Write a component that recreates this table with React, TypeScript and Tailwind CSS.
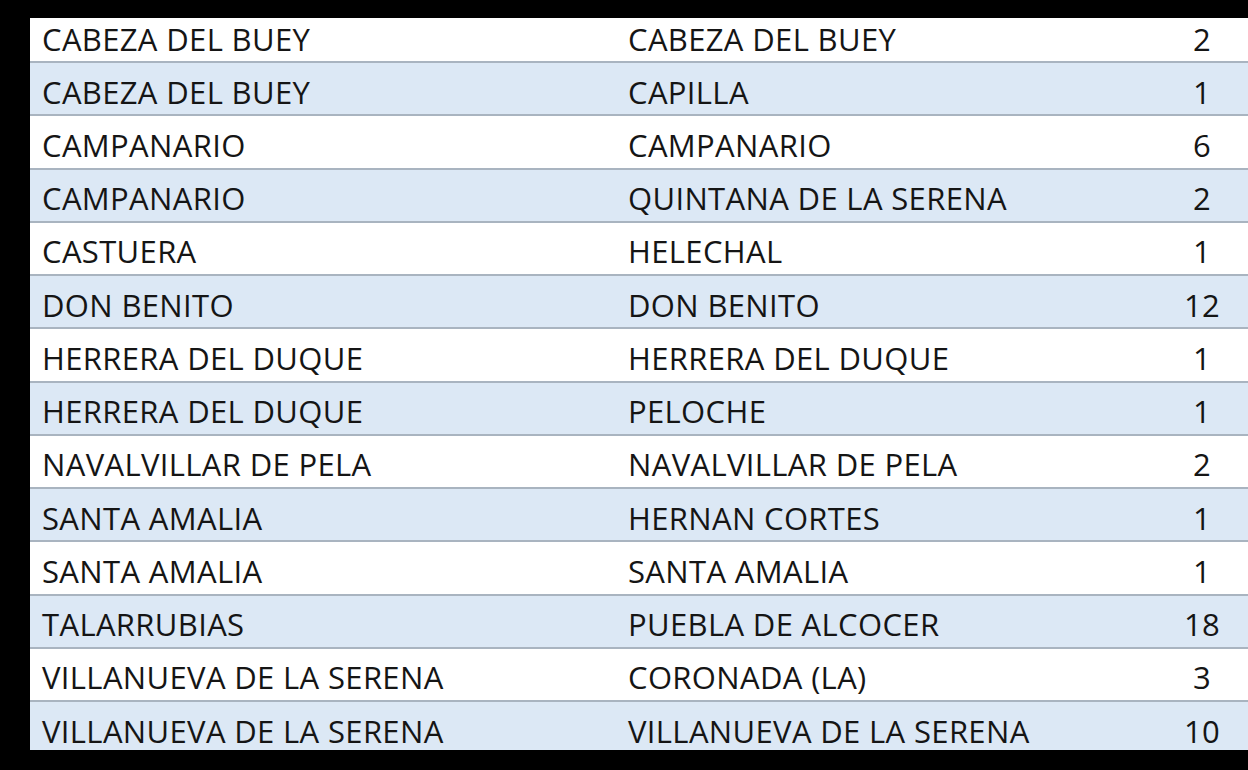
const rows: [string, string, number][] = [
  ['CABEZA DEL BUEY', 'CABEZA DEL BUEY', 2],
  ['CABEZA DEL BUEY', 'CAPILLA', 1],
  ['CAMPANARIO', 'CAMPANARIO', 6],
  ['CAMPANARIO', 'QUINTANA DE LA SERENA', 2],
  ['CASTUERA', 'HELECHAL', 1],
  ['DON BENITO', 'DON BENITO', 12],
  ['HERRERA DEL DUQUE', 'HERRERA DEL DUQUE', 1],
  ['HERRERA DEL DUQUE', 'PELOCHE', 1],
  ['NAVALVILLAR DE PELA', 'NAVALVILLAR DE PELA', 2],
  ['SANTA AMALIA', 'HERNAN CORTES', 1],
  ['SANTA AMALIA', 'SANTA AMALIA', 1],
  ['TALARRUBIAS', 'PUEBLA DE ALCOCER', 18],
  ['VILLANUEVA DE LA SERENA', 'CORONADA (LA)', 3],
  ['VILLANUEVA DE LA SERENA', 'VILLANUEVA DE LA SERENA', 10],
];

export default function App() {
  const last = rows.length - 1;
  return (
    <div className="w-[1248px] h-[770px] bg-black pt-[18px] pl-[30px]">
      <div className="font-['Open_Sans',sans-serif] text-[31px] tracking-[0.35px] leading-[34px] text-[#151515]">
        {rows.map(([a, b, n], i) => (
          <div
            key={i}
            className={`grid grid-cols-[586px_534px_80px] items-start pl-[12px] pr-[6px] ${
              i === 0 ? 'h-[45px] pt-[3.6px]' : i === last ? 'h-[47.75px] pt-[11.6px]' : 'h-[53.25px] pt-[11.6px]'
            } ${i === last ? '' : 'border-b-2 border-[#a9b4c0]'} ${i % 2 === 1 ? 'bg-[#dce8f5]' : 'bg-white'}`}
          >
            <span>{a}</span>
            <span>{b}</span>
            <span className="text-center">{n}</span>
          </div>
        ))}
      </div>
    </div>
  );
}
